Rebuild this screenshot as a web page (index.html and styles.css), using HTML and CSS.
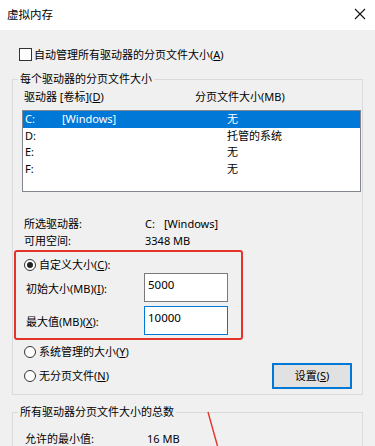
FILE: index.html
```html
<!DOCTYPE html>
<html lang="zh-CN">
<head>
<meta charset="utf-8">
<title>虚拟内存</title>
<link rel="stylesheet" href="styles.css">
</head>
<body>
<div class="window">
  <div class="titlebar">
    <span class="title">虚拟内存</span>
    <svg class="close" width="12" height="12" viewBox="0 0 12 12"><path d="M1 1 L11 11 M11 1 L1 11" stroke="#111" stroke-width="1.1" fill="none"/></svg>
  </div>
  <div class="client">
    <div class="auto"><span class="checkbox"></span><span>自动管理所有驱动器的分页文件大小(<u>A</u>)</span></div>

    <fieldset class="group g1">
      <legend>每个驱动器的分页文件大小</legend>
      <div class="head"><span>驱动器 [卷标](<u>D</u>)</span><span>分页文件大小(MB)</span></div>
      <div class="listbox">
        <div class="row sel"><span>C:</span><span>[Windows]</span><span>无</span></div>
        <div class="row"><span>D:</span><span></span><span>托管的系统</span></div>
        <div class="row"><span>E:</span><span></span><span>无</span></div>
        <div class="row"><span>F:</span><span></span><span>无</span></div>
      </div>
      <div class="info">
        <span>所选驱动器:</span><span><span class="drv">C:</span>[Windows]</span>
        <span>可用空间:</span><span>3348 MB</span>
      </div>
      <div class="highlight">
        <div class="radio-row"><span class="radio on"></span><span>自定义大小(<u>C</u>):</span></div>
        <div class="sizes">
          <span>初始大小(MB)(<u>I</u>):</span><div class="input">5000</div>
          <span>最大值(MB)(<u>X</u>):</span><div class="input focus">10000</div>
        </div>
      </div>
      <div class="opts">
        <div class="radio-row"><span class="radio"></span><span>系统管理的大小(<u>Y</u>)</span></div>
        <div class="opt-last">
          <div class="radio-row"><span class="radio"></span><span>无分页文件(<u>N</u>)</span></div>
          <div class="button">设置(<u>S</u>)</div>
        </div>
      </div>
    </fieldset>

    <fieldset class="group g2">
      <legend>所有驱动器分页文件大小的总数</legend>
      <div class="totals"><span>允许的最小值:</span><span>16 MB</span></div>
    </fieldset>
  </div>
  <svg class="arrow" width="375" height="446" viewBox="0 0 375 446"><path d="M208 412 L217.5 446" stroke="#e3342c" stroke-width="1.4" fill="none"/></svg>
</div>
</body>
</html>
```

FILE: styles.css
```css
* { box-sizing: border-box; }
html, body { margin: 0; padding: 0; }
body {
  width: 375px;
  height: 446px;
  overflow: hidden;
  background: #f0f0f0;
  font-family: "Noto Sans", "Noto Sans CJK SC", sans-serif;
  font-size: 11px;
  color: #000;
}
u { text-decoration: underline; text-underline-offset: 1px; }
.window { position: relative; width: 375px; height: 446px; }

.titlebar {
  height: 30px;
  background: #fff;
  display: flex;
  align-items: center;
  justify-content: space-between;
  padding: 0 9px 0 7px;
}
.title { font-size: 11.5px; line-height: 14px; }
.close { display: block; margin-top: -2px; }

.client { padding: 0; }

.auto {
  margin: 18px 0 0 19px;
  height: 13px;
  display: flex;
  align-items: center;
  line-height: 13px;
}
.checkbox {
  width: 13px;
  height: 13px;
  border: 1px solid #333;
  background: #fff;
  margin-right: 2px;
  flex: none;
}

.group {
  margin: 0 12px 0 12px;
  padding: 0 1px 0 0;
  border: 1px solid #dadada;
  min-inline-size: 0;
}
.group legend {
  line-height: 14px;
  padding: 0 2px;
  margin-left: 5px;
}
.g1 { margin-top: 11px; padding-bottom: 5px; }
.g2 { margin-top: 10px; padding-bottom: 20px; }

.head {
  margin-top: 4px;
  padding-left: 11px;
  display: grid;
  grid-template-columns: 171px 1fr;
  line-height: 14px;
}

.listbox {
  margin: 6px 0 0 9px;
  height: 82px;
  border: 1px solid #828790;
  background: #fff;
}
.row {
  height: 16.5px;
  line-height: 16.5px;
  display: grid;
  grid-template-columns: 37px 165px 1fr;
  padding-left: 2px;
}
.row.sel { background: #0078d7; color: #fff; }

.info {
  margin-top: 23px;
  padding-left: 11px;
  display: grid;
  grid-template-columns: 121px 1fr;
  grid-auto-rows: 17px;
  line-height: 17px;
}
.drv { margin-right: 9px; }

.highlight {
  margin: 1px 0 0 1px;
  width: 229px;
  height: 90px;
  border: 2px solid #e3342c;
  border-radius: 3px;
}
.radio-row {
  display: flex;
  align-items: center;
  height: 14px;
  line-height: 14px;
}
.highlight .radio-row { margin-top: 6px; padding-left: 8px; }
.radio {
  width: 12px;
  height: 12px;
  border: 1px solid #333;
  border-radius: 50%;
  background: #fff;
  margin-right: 3px;
  flex: none;
  display: flex;
  align-items: center;
  justify-content: center;
}
.radio.on::after {
  content: "";
  width: 6px;
  height: 6px;
  border-radius: 50%;
  background: #222;
}

.sizes {
  margin-top: 1px;
  padding-left: 10px;
  display: grid;
  grid-template-columns: 118px 84px;
  grid-auto-rows: 29px;
  row-gap: 4px;
  align-items: center;
}
.input {
  height: 29px;
  border: 1px solid #7a7a7a;
  background: #fff;
  padding: 4px 3px 0;
  line-height: 14px;
  font-size: 11.5px;
}
.input.focus { border-color: #0078d7; }

.opts { padding-left: 11px; }
.opts > .radio-row { margin-top: 5px; }
.opt-last {
  margin-top: 4px;
  height: 26px;
  display: flex;
  align-items: center;
  justify-content: space-between;
  padding-right: 9px;
}
.button {
  width: 80px;
  height: 26px;
  border: 2px solid #0078d7;
  background: #e1e1e1;
  display: flex;
  align-items: center;
  justify-content: center;
  line-height: 14px;
}

.totals {
  margin-top: 13px;
  padding-left: 12px;
  display: grid;
  grid-template-columns: 122px 1fr;
  line-height: 14px;
}

.arrow {
  position: absolute;
  left: 0;
  top: 0;
  pointer-events: none;
}
```
